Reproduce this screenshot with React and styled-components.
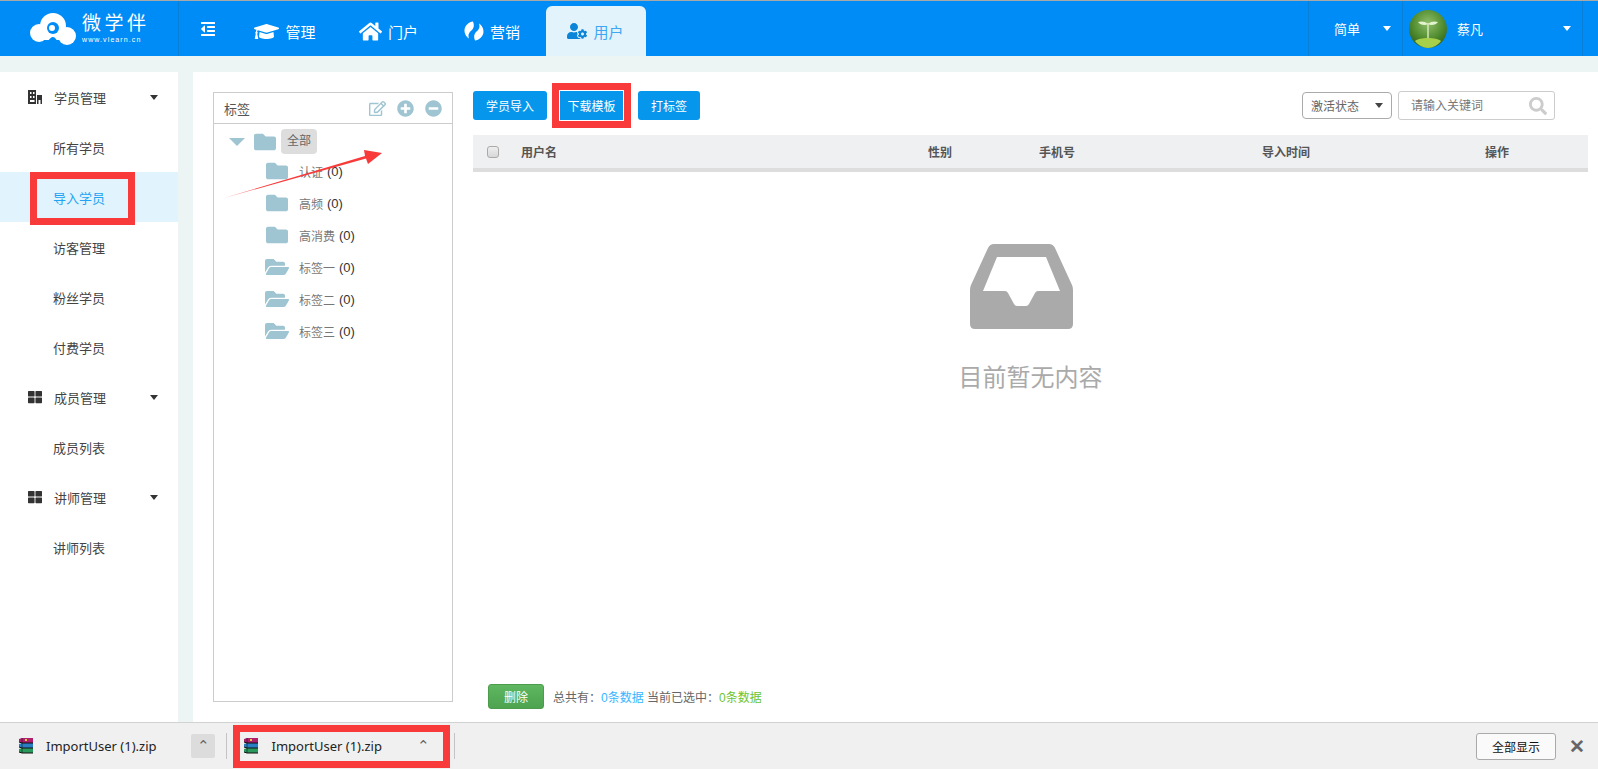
import styled, { createGlobalStyle } from "styled-components";
import {
  FaBan,
  FaFolder,
  FaFolderOpen,
  FaGraduationCap,
  FaHome,
  FaMinusCircle,
  FaOutdent,
  FaPlusCircle,
  FaRegEdit,
  FaSearch,
  FaThLarge,
  FaUserCog,
} from "react-icons/fa";

const GlobalStyle = createGlobalStyle`
  html, body {
    margin: 0;
    padding: 0;
    height: 100%;
    overflow: hidden;
  }
  body {
    font-family: "Liberation Sans", "Noto Sans CJK SC", sans-serif;
    font-size: 13px;
    color: #444;
  }
  * {
    box-sizing: border-box;
  }
`;

const Page = styled.div`
  display: flex;
  flex-direction: column;
  height: 769px;
  background: #edf5f4;
`;

const Header = styled.header`
  display: flex;
  flex: none;
  height: 56px;
  background: #008cf6;
  border-top: 1px solid #a9a9a9;
  color: #fff;
`;

const Logo = styled.div`
  display: flex;
  align-items: center;
  width: 179px;
  padding-left: 30px;
  border-right: 1px solid #0a7fd8;
`;

const LogoText = styled.div`
  display: flex;
  flex-direction: column;
  margin-left: 6px;
  strong {
    font-size: 19px;
    line-height: 20px;
    font-weight: 400;
    letter-spacing: 3.5px;
    white-space: nowrap;
  }
  span {
    font-size: 7px;
    line-height: 8px;
    letter-spacing: 1.1px;
    margin-top: 2px;
  }
`;

const Toggle = styled.div`
  display: flex;
  align-items: flex-start;
  width: 56px;
  padding: 20px 0 0 21px;
  font-size: 16px;
`;

const Tabs = styled.nav`
  display: flex;
  gap: 3.5px;
`;

const Tab = styled.div`
  display: flex;
  align-items: center;
  justify-content: center;
  gap: 6px;
  width: 100px;
  margin-top: ${(p) => (p.$active ? "5px" : "0")};
  padding-top: ${(p) => (p.$active ? "0" : "5px")};
  font-size: 15px;
  color: ${(p) => (p.$active ? "#3ea6f2" : "#fff")};
  background: ${(p) => (p.$active ? "#e3f3fc" : "transparent")};
  border-radius: ${(p) => (p.$active ? "6px 6px 0 0" : "0")};
  svg {
    font-size: 20px;
    color: ${(p) => (p.$active ? "#0b85d8" : "#fff")};
  }
`;

const HeaderRight = styled.div`
  display: flex;
  margin-left: auto;
  margin-right: 15px;
`;

const Caret = styled.i`
  display: block;
  width: 0;
  height: 0;
  border-left: 4.5px solid transparent;
  border-right: 4.5px solid transparent;
  border-top: 5px solid ${(p) => p.$color || "#fff"};
`;

const LangSwitch = styled.div`
  display: flex;
  align-items: center;
  justify-content: space-between;
  width: 94px;
  padding: 0 11px 0 25px;
  font-size: 13px;
  border-left: 1px solid #0a7fd8;
`;

const UserBox = styled.div`
  display: flex;
  align-items: center;
  width: 181px;
  padding: 0 11px 0 6px;
  font-size: 13px;
  border-left: 1px solid #0a7fd8;
  border-right: 1px solid #0a7fd8;
  span {
    margin-left: 10px;
    flex: 1;
  }
`;

const Body = styled.div`
  display: flex;
  flex: 1;
  min-height: 0;
  padding-top: 16px;
  gap: 15px;
`;

const Sidebar = styled.aside`
  flex: none;
  width: 178px;
  background: #fff;
`;

const GroupRow = styled.div`
  display: flex;
  align-items: center;
  height: 50px;
  padding: 0 20px 0 28px;
  font-size: 13px;
  color: #444;
  span {
    margin-left: 12px;
    flex: 1;
  }
  svg {
    width: 14px;
    height: 14px;
    color: #333;
  }
`;

const NavItem = styled.div`
  position: relative;
  display: flex;
  align-items: center;
  height: 50px;
  padding-left: 53px;
  font-size: 13px;
  color: ${(p) => (p.$active ? "#1fa3f3" : "#444")};
  background: ${(p) => (p.$active ? "#e1f3fc" : "transparent")};
  ${(p) =>
    p.$active &&
    `&::after {
      content: "";
      position: absolute;
      top: 0;
      bottom: -3px;
      left: 30px;
      width: 91px;
      border: 7px solid #f93a3a;
    }`}
`;

const Main = styled.main`
  display: flex;
  flex: 1;
  min-width: 0;
  padding-right: 10px;
  background: #fff;
`;

const TagPanel = styled.section`
  position: relative;
  flex: none;
  width: 240px;
  margin: 20px;
  border: 1px solid #ccc;
`;

const PanelHead = styled.div`
  display: flex;
  align-items: center;
  height: 31px;
  padding: 0 10px;
  border-bottom: 1px solid #ccc;
  font-size: 13px;
  color: #555;
  span {
    flex: 1;
  }
`;

const HeadIcons = styled.div`
  display: flex;
  align-items: center;
  gap: 11px;
  color: #9fc5d2;
  svg {
    width: 17px;
    height: 17px;
    display: block;
  }
`;

const TreeRoot = styled.div`
  display: flex;
  align-items: center;
  height: 27px;
  margin-top: 4px;
  padding-left: 15px;
  svg {
    width: 24px;
    height: 22px;
    margin-left: 8px;
    color: #9fc5d2;
  }
`;

const TreeCaret = styled(Caret)`
  border-left-width: 8px;
  border-right-width: 8px;
  border-top-width: 8px;
`;

const RootLabel = styled.span`
  margin-left: 4px;
  padding: 0 6px;
  height: 25px;
  line-height: 25px;
  font-size: 12px;
  color: #666;
  background: #ddd;
  border-radius: 4px;
`;

const TreeRow = styled.div`
  display: flex;
  align-items: center;
  height: 32px;
  padding-left: 51px;
  font-size: 12px;
  color: #777;
  svg {
    width: 24px;
    height: 22px;
    margin-right: 10px;
    color: #9fc5d2;
  }
  b {
    margin-left: 4px;
    font-weight: 400;
    font-size: 13px;
    color: #333;
  }
`;

const Arrow = styled.svg`
  position: absolute;
  left: 0;
  top: 0;
  pointer-events: none;
`;

const Content = styled.div`
  display: flex;
  flex-direction: column;
  flex: 1;
  min-width: 0;
  padding: 19px 0 13px;
`;

const Toolbar = styled.div`
  display: flex;
  align-items: center;
  height: 29px;
  gap: 12px;
`;

const BlueButton = styled.button`
  display: block;
  height: 29px;
  padding: 0;
  width: ${(p) => p.$w}px;
  border: 0;
  border-radius: 3px;
  background: #0697ed;
  color: #fff;
  font: inherit;
  font-size: 12px;
`;

const Marked = styled.div`
  position: relative;
  margin-right: 2px;
  &::after {
    content: "";
    position: absolute;
    inset: -8px -7px;
    border: 7px solid #f93a3a;
    box-shadow: inset 0 0 0 1px #fff;
  }
  ${BlueButton} {
    border-radius: 0;
  }
`;

const Filters = styled.div`
  display: flex;
  align-items: center;
  gap: 6px;
  margin-left: auto;
  margin-right: 33px;
`;

const StatusSelect = styled.div`
  display: flex;
  align-items: center;
  justify-content: space-between;
  width: 90px;
  height: 27px;
  padding: 0 8px;
  border: 1px solid #aaa;
  border-radius: 4px;
  font-size: 12px;
  color: #666;
`;

const SearchBox = styled.div`
  display: flex;
  align-items: center;
  width: 157px;
  height: 29px;
  padding: 0 7px 0 12px;
  border: 1px solid #ccc;
  border-radius: 3px;
  input {
    flex: 1;
    min-width: 0;
    border: 0;
    outline: 0;
    padding: 0;
    font: inherit;
    font-size: 12px;
  }
  input::placeholder {
    color: #777;
  }
  svg {
    width: 18px;
    height: 18px;
    color: #ccc;
  }
`;

const TableHead = styled.div`
  display: grid;
  grid-template-columns: 48px 407px 111px 223px 223px 1fr;
  align-items: center;
  flex: none;
  height: 37px;
  margin-top: 15px;
  background: #eff0f2;
  border-bottom: 4px solid #ddd;
  font-size: 12px;
  font-weight: 700;
  color: #555;
`;

const CheckBox = styled.i`
  display: block;
  width: 12px;
  height: 12px;
  margin-left: 14px;
  border: 1px solid #aaa;
  border-radius: 3px;
  background: linear-gradient(#eee, #d8d8d8);
`;

const Empty = styled.div`
  display: flex;
  flex-direction: column;
  align-items: center;
  flex: 1;
  padding-top: 72px;
  svg {
    margin-right: 18px;
  }
  p {
    margin: 33px 0 0;
    font-size: 24px;
    line-height: 32px;
    color: #aaa;
  }
`;

const BottomBar = styled.div`
  display: flex;
  align-items: center;
  gap: 9px;
  padding-left: 15px;
  font-size: 12px;
  color: #666;
  em {
    font-style: normal;
    color: ${(p) => p.$blue || "#38b6ff"};
  }
  em + em {
    color: #6cc52e;
  }
`;

const DeleteButton = styled.button`
  width: 56px;
  height: 25px;
  padding: 0;
  border: 1px solid #4b9c4b;
  border-radius: 3px;
  background: linear-gradient(#5fb761, #4da34f);
  color: #fff;
  font: inherit;
  font-size: 12px;
`;

const DownloadBar = styled.footer`
  display: flex;
  align-items: center;
  flex: none;
  height: 47px;
  padding-left: 18px;
  background: #f0f0f0;
  border-top: 1px solid #d2d2d2;
`;

const FileName = styled.span`
  margin-left: 12px;
  font-family: "Noto Sans", "Liberation Sans", sans-serif;
  font-size: 13px;
  color: #222;
  white-space: nowrap;
`;

const ChevronButton = styled.div`
  display: flex;
  align-items: center;
  justify-content: center;
  width: 24px;
  height: 24px;
  margin-left: 35px;
  border-radius: 2px;
  background: #dcdcdc;
  font-size: 15px;
  color: #666;
`;

const BarSep = styled.i`
  display: block;
  width: 1px;
  height: 26px;
  background: #c4c4c4;
  margin: ${(p) => p.$margin};
`;

const MarkedDownload = styled.div`
  display: flex;
  align-items: center;
  width: 217px;
  height: 43px;
  padding-left: 3px;
  border: 7px solid #f93a3a;
  ${ChevronButton} {
    width: 12px;
    margin-left: 36px;
    background: transparent;
  }
`;

const ShowAll = styled.button`
  width: 80px;
  height: 27px;
  margin-left: auto;
  padding: 0;
  border: 1px solid #aaa;
  border-radius: 3px;
  background: #fafafa;
  color: #111;
  font: inherit;
  font-size: 12px;
`;

const CloseBar = styled.span`
  margin: 0 13px;
  font-size: 19px;
  line-height: 1;
  font-weight: 700;
  color: #666;
`;

const CloudLogo = () => (
  <svg width="46" height="32" viewBox="0 0 46 32">
    <circle cx="9" cy="20" r="9" fill="#fff" />
    <circle cx="23" cy="13" r="13" fill="#fff" />
    <circle cx="37" cy="23" r="9" fill="#fff" />
    <rect x="9" y="18" width="28" height="9" fill="#fff" />
    <path d="M15 32 Q21 23 23 24 Q26 24 29 32 Z" fill="#008cf6" />
    <circle cx="23" cy="15" r="6" fill="#008cf6" />
    <circle cx="22" cy="15" r="3" fill="#fff" />
  </svg>
);

const SwirlIcon = () => (
  <svg width="20" height="20" viewBox="0 0 20 20" fill="#fff">
    <path d="M9 .5C5 1 1.500 4 .6 8c-.6 4 1.400 7.500 4.400 9.500C3.500 13.500 5.500 11 8 9c2-2 2.500-5 1-8.500z" />
    <path d="M11 19.500c4-.5 7.500-3.500 8.400-7.500.6-4-1.400-7.500-4.400-9.500 1.500 4-.5 6.500-3 8.500-2 2-2.500 5-1 8.500z" />
  </svg>
);

const BuildingIcon = () => (
  <svg viewBox="0 0 14 14" fill="#333">
    <path d="M0 0h8v14H0zM2 2v2h1.500V2zm3 0v2h1.500V2zM2 6v2h1.500V6zm3 0v2h1.500V6zM2 10v2h4.500v-2z" fillRule="evenodd" />
    <path d="M9 5h5v9h-1.500v-4h-2v4H9z" />
  </svg>
);

const Avatar = () => (
  <svg width="38" height="38" viewBox="0 0 38 38">
    <defs>
      <radialGradient id="leafbg" cx="50%" cy="35%" r="70%">
        <stop offset="0%" stopColor="#8fbf6a" />
        <stop offset="60%" stopColor="#4f8a2e" />
        <stop offset="100%" stopColor="#2c5c18" />
      </radialGradient>
    </defs>
    <circle cx="19" cy="19" r="19" fill="url(#leafbg)" />
    <path d="M18.300 13h1.400v18h-1.400z" fill="#dbeec0" />
    <path d="M19 14C16 11 12 11 9 12c2 3 7 4 10 2zM19 14c3-3 7-3 10-2-2 3-7 4-10 2z" fill="#e4f2cf" />
    <path d="M6 31c4-4 22-4 26 0-3 4-8 7-13 7s-10-3-13-7z" fill="#a6d04a" />
  </svg>
);

const InboxIcon = () => (
  <svg width="103" height="85" viewBox="0 0 103 85">
    <path
      fill="#aaa"
      fillRule="evenodd"
      d="M24 0h55q4 0 6 4l17 37q1 2 1 5v34q0 5-5 5H5q-5 0-5-5V46q0-3 1-5L18 4q2-4 6-4zM27 13 13 47h22q2 0 3 2l6 11q1 2 3 2h9q2 0 3-2l6-11q1-2 3-2h22L76 13z"
    />
  </svg>
);

const RarIcon = () => (
  <svg width="16" height="16" viewBox="0 0 16 16">
    <path d="M1 1l3-1h11v5H4L1 4z" fill="#b01e6e" />
    <path d="M1 6l3-1h11v5H4L1 9z" fill="#2a7fc4" />
    <path d="M1 11l3-1h11v5H4l-3-1z" fill="#2a9a5c" />
    <path d="M1 4l3 1h11M1 9l3 1h11M1 14l3 1h11" stroke="#111" fill="none" />
    <path d="M4 0v15" stroke="#111" strokeWidth=".6" />
    <rect x="7" y="1" width="2" height="2" fill="#e8c840" />
  </svg>
);

const subFolders = [
  { name: "认证", open: false },
  { name: "高频", open: false },
  { name: "高消费", open: false },
  { name: "标签一", open: true },
  { name: "标签二", open: true },
  { name: "标签三", open: true },
];

const App = () => {
  return (
    <Page>
      <GlobalStyle />
      <Header>
        <Logo>
          <CloudLogo />
          <LogoText>
            <strong>微学伴</strong>
            <span>www.vlearn.cn</span>
          </LogoText>
        </Logo>
        <Toggle>
          <FaOutdent />
        </Toggle>
        <Tabs>
          <Tab>
            <FaGraduationCap style={{ fontSize: 25 }} />
            管理
          </Tab>
          <Tab>
            <FaHome style={{ fontSize: 23 }} />
            门户
          </Tab>
          <Tab>
            <SwirlIcon />
            营销
          </Tab>
          <Tab $active>
            <FaUserCog />
            用户
          </Tab>
        </Tabs>
        <HeaderRight>
          <LangSwitch>
            简单
            <Caret />
          </LangSwitch>
          <UserBox>
            <Avatar />
            <span>蔡凡</span>
            <Caret />
          </UserBox>
        </HeaderRight>
      </Header>
      <Body>
        <Sidebar>
          <GroupRow>
            <BuildingIcon />
            <span>学员管理</span>
            <Caret $color="#333" />
          </GroupRow>
          <NavItem>所有学员</NavItem>
          <NavItem $active>导入学员</NavItem>
          <NavItem>访客管理</NavItem>
          <NavItem>粉丝学员</NavItem>
          <NavItem>付费学员</NavItem>
          <GroupRow>
            <FaThLarge />
            <span>成员管理</span>
            <Caret $color="#333" />
          </GroupRow>
          <NavItem>成员列表</NavItem>
          <GroupRow>
            <FaThLarge />
            <span>讲师管理</span>
            <Caret $color="#333" />
          </GroupRow>
          <NavItem>讲师列表</NavItem>
        </Sidebar>
        <Main>
          <TagPanel>
            <PanelHead>
              <span>标签</span>
              <HeadIcons>
                <FaRegEdit />
                <FaPlusCircle />
                <FaMinusCircle />
              </HeadIcons>
            </PanelHead>
            <TreeRoot>
              <TreeCaret $color="#9fc5d2" />
              <FaFolder />
              <RootLabel>全部</RootLabel>
            </TreeRoot>
            {subFolders.map((f) => (
              <TreeRow key={f.name}>
                {f.open ? <FaFolderOpen /> : <FaFolder />}
                {f.name}
                <b>(0)</b>
              </TreeRow>
            ))}
            <Arrow width="180" height="120" viewBox="0 0 180 120">
              <path d="M10 105 151 63 150 57 168 60 154 71 152 65.500Z" fill="#f93a3a" />
            </Arrow>
          </TagPanel>
          <Content>
            <Toolbar>
              <BlueButton $w={74}>学员导入</BlueButton>
              <Marked>
                <BlueButton $w={65}>下载模板</BlueButton>
              </Marked>
              <BlueButton $w={62}>打标签</BlueButton>
              <Filters>
                <StatusSelect>
                  激活状态
                  <Caret $color="#444" />
                </StatusSelect>
                <SearchBox>
                  <input placeholder="请输入关键词" />
                  <FaSearch />
                </SearchBox>
              </Filters>
            </Toolbar>
            <TableHead>
              <CheckBox />
              <span>用户名</span>
              <span>性别</span>
              <span>手机号</span>
              <span>导入时间</span>
              <span>操作</span>
            </TableHead>
            <Empty>
              <InboxIcon />
              <p>目前暂无内容</p>
            </Empty>
            <BottomBar>
              <DeleteButton>删除</DeleteButton>
              <div>
                总共有：<em>0条数据</em> 当前已选中：<em style={{ color: "#6cc52e" }}>0条数据</em>
              </div>
            </BottomBar>
          </Content>
        </Main>
      </Body>
      <DownloadBar>
        <RarIcon />
        <FileName>ImportUser (1).zip</FileName>
        <ChevronButton>⌃</ChevronButton>
        <BarSep $margin="0 6px 0 11px" />
        <MarkedDownload>
          <RarIcon />
          <FileName>ImportUser (1).zip</FileName>
          <ChevronButton>⌃</ChevronButton>
        </MarkedDownload>
        <BarSep $margin="0 0 0 4px" />
        <ShowAll>全部显示</ShowAll>
        <CloseBar>✕</CloseBar>
      </DownloadBar>
    </Page>
  );
};

export default App;
